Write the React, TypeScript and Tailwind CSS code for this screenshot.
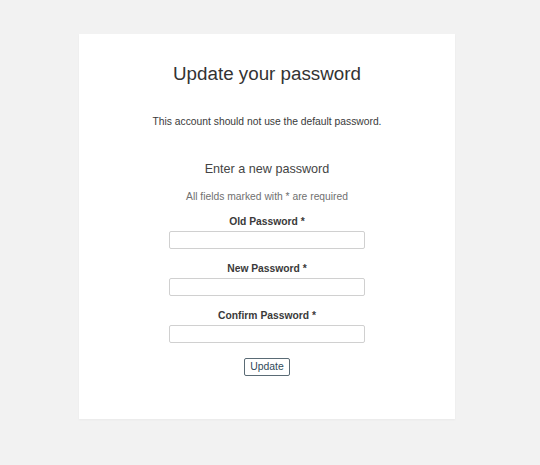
import React from 'react';

const fields = ['Old Password', 'New Password', 'Confirm Password'];

export default function App() {
    return (
        <div className="min-h-[465px] bg-[#f2f2f2] pt-[34px] font-['Liberation_Sans',Arial,sans-serif] text-[#333]">
            <div className="ml-[79px] w-[376px] h-[385px] bg-white flex flex-col items-center pt-[29px] shadow-[0_1px_2px_rgba(0,0,0,0.04)]">
                <h1 className="text-[18.8px] leading-[22px] font-normal text-[#333]">Update your password</h1>
                <p className="mt-[30px] text-[10.3px] leading-[14px] text-[#3a3a3a]">
                    This account should not use the default password.
                </p>
                <h2 className="mt-[31px] text-[12.6px] leading-[18px] text-[#444]">Enter a new password</h2>
                <p className="mt-[12px] text-[10.3px] leading-[14px] text-[#707070]">All fields marked with * are required</p>

                <form className="flex flex-col items-center" onSubmit={(e) => e.preventDefault()}>
                    {fields.map((label, i) => (
                        <div key={label} className={`flex flex-col items-center ${i === 0 ? 'mt-[11px]' : 'mt-[13px]'}`}>
                            <label className="text-[10.3px] leading-[14px] font-bold text-[#3a3a3a]">
                                {label} *
                            </label>
                            <input
                                type="password"
                                className="mt-[2px] w-[196px] h-[18px] border border-[#d0d0d0] rounded-[2px] bg-white outline-none"
                            />
                        </div>
                    ))}
                    <button
                        type="submit"
                        className="mt-[15px] w-[46px] h-[18px] border border-[#5a6b75] rounded-[2px] bg-white text-[10.4px] leading-[16px] text-[#2f4a5a]"
                    >
                        Update
                    </button>
                </form>
            </div>
        </div>
    );
}
